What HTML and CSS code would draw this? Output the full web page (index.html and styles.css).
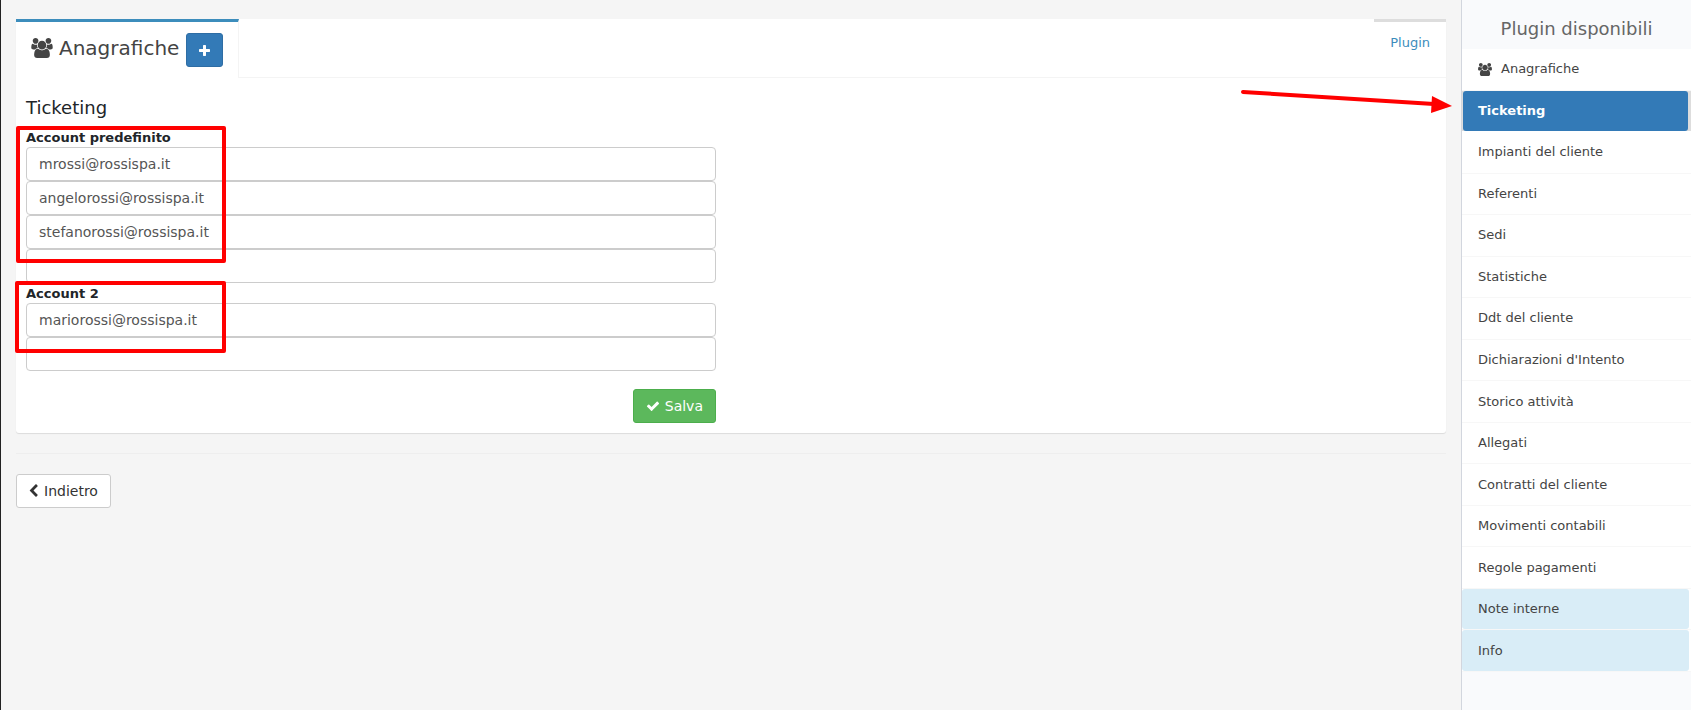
FILE: index.html
```html
<!DOCTYPE html>
<html lang="it">
<head>
  <meta charset="UTF-8">
  <meta name="viewport" content="width=device-width, initial-scale=1.0">
  <title>Anagrafiche - Ticketing</title>
  <link rel="stylesheet" href="styles.css">
</head>
<body>
  <svg class="sprite" aria-hidden="true">
    <symbol id="icon-users" viewBox="0 0 1920 1792"><path d="M593 896q-162 5-265 128h-134q-82 0-138-40.5t-56-118.5q0-353 124-353 6 0 43.5 21t97.5 42.5 119 21.5q67 0 133-23-5 37-5 66 0 139 81 256zm1071 637q0 120-73 189.5t-194 69.5h-874q-121 0-194-69.5t-73-189.5q0-53 3.5-103.5t14-109 26.5-108.5 43-97.5 62-81 85.5-53.5 111.5-20q10 0 43 21.5t73 48 107 48 135 21.5 135-21.5 107-48 73-48 43-21.5q61 0 111.5 20t85.5 53.5 62 81 43 97.5 26.5 108.5 14 109 3.5 103.5zm-1024-1277q0 106-75 181t-181 75-181-75-75-181 75-181 181-75 181 75 75 181zm704 384q0 159-112.5 271.5t-271.5 112.5-271.5-112.5-112.5-271.5 112.5-271.5 271.5-112.5 271.5 112.5 112.5 271.5zm576 225q0 78-56 118.5t-138 40.5h-134q-103-123-265-128 81-117 81-256 0-29-5-66 66 23 133 23 59 0 119-21.5t97.5-42.5 43.5-21q124 0 124 353zm-128-609q0 106-75 181t-181 75-181-75-75-181 75-181 181-75 181 75 75 181z"/></symbol>
    <symbol id="icon-plus" viewBox="192 128 1408 1408"><path d="M1600 736v192q0 40-28 68t-68 28h-416v416q0 40-28 68t-68 28h-192q-40 0-68-28t-28-68v-416h-416q-40 0-68-28t-28-68v-192q0-40 28-68t68-28h416v-416q0-40 28-68t68-28h192q40 0 68 28t28 68v416h416q40 0 68 28t28 68z"/></symbol>
    <symbol id="icon-check" viewBox="0 0 1792 1792"><path d="M1671 566q0 40-28 68l-724 724-136 136q-28 28-68 28t-68-28l-136-136-362-362q-28-28-28-68t28-68l136-136q28-28 68-28t68 28l294 295 656-657q28-28 68-28t68 28l136 136q28 28 28 68z"/></symbol>
    <symbol id="icon-back" viewBox="320 0 1280 1792"><path d="M1427 301l-531 531 531 531q19 19 19 45t-19 45l-166 166q-19 19-45 19t-45-19l-742-742q-19-19-19-45t19-45l742-742q19-19 45-19t45 19l166 166q19 19 19 45t-19 45z"/></symbol>
  </svg>

  <main class="content">
    <section class="panel">
      <div class="tabs">
        <div class="tab active">
          <svg class="icon-title"><use href="#icon-users"/></svg>
          <h1>Anagrafiche</h1>
          <button type="button" class="btn btn-primary" aria-label="Aggiungi"><svg class="icon-plus"><use href="#icon-plus"/></svg></button>
        </div>
        <a class="tab-plugin" href="#plugin">Plugin</a>
      </div>

      <form class="tab-content">
        <h2>Ticketing</h2>
        <div class="account">
          <label for="account-1">Account predefinito</label>
          <input type="text" id="account-1" value="mrossi@rossispa.it">
          <input type="text" aria-label="Account predefinito 2" value="angelorossi@rossispa.it">
          <input type="text" aria-label="Account predefinito 3" value="stefanorossi@rossispa.it">
          <input type="text" aria-label="Account predefinito 4">
          <div class="mark mark-first"></div>
        </div>
        <div class="account">
          <label for="account-2">Account 2</label>
          <input type="text" id="account-2" value="mariorossi@rossispa.it">
          <input type="text" aria-label="Account 2, secondo indirizzo">
          <div class="mark mark-second"></div>
        </div>
        <div class="actions">
          <button type="button" class="btn btn-success"><svg class="icon"><use href="#icon-check"/></svg>Salva</button>
        </div>
      </form>

      <svg class="arrow" viewBox="0 0 212 30" aria-hidden="true">
        <path d="M3 4L194 16" stroke="#f00" stroke-width="4" stroke-linecap="round"/>
        <path d="M192 8L212 18L191 25Z" fill="#f00"/>
      </svg>
    </section>

    <hr>
    <a class="btn btn-default" href="#indietro"><svg class="icon-back"><use href="#icon-back"/></svg>Indietro</a>
  </main>

  <aside class="sidebar">
    <h2>Plugin disponibili</h2>
    <ul>
      <li><a href="#anagrafiche"><svg class="icon-side"><use href="#icon-users"/></svg>Anagrafiche</a></li>
      <li class="active"><a href="#ticketing">Ticketing</a></li>
      <li><a href="#impianti">Impianti del cliente</a></li>
      <li><a href="#referenti">Referenti</a></li>
      <li><a href="#sedi">Sedi</a></li>
      <li><a href="#statistiche">Statistiche</a></li>
      <li><a href="#ddt">Ddt del cliente</a></li>
      <li><a href="#dichiarazioni">Dichiarazioni d'Intento</a></li>
      <li><a href="#storico">Storico attività</a></li>
      <li><a href="#allegati">Allegati</a></li>
      <li><a href="#contratti">Contratti del cliente</a></li>
      <li><a href="#movimenti">Movimenti contabili</a></li>
      <li><a href="#regole">Regole pagamenti</a></li>
      <li class="info"><a href="#note">Note interne</a></li>
      <li class="info"><a href="#info">Info</a></li>
    </ul>
  </aside>
</body>
</html>
```

FILE: styles.css
```css
* {
  box-sizing: border-box;
}

body {
  display: flex;
  min-height: 100vh;
  margin: 0;
  border-left: 1px solid #222;
  background: #f5f5f5;
  color: #212529;
  font-family: "DejaVu Sans", sans-serif;
  font-size: 13px;
  line-height: 20px;
}

h1,
h2 {
  margin: 0;
  font-weight: normal;
}

a {
  color: #3c8dbc;
  text-decoration: none;
}

svg {
  fill: currentColor;
  flex: none;
}

.sprite {
  position: absolute;
  width: 0;
  height: 0;
}

.content {
  flex: 1;
  padding: 19px 15px;
}

.panel {
  position: relative;
  background: #fff;
  border-radius: 3px;
  box-shadow: 0 1px 1px rgba(0, 0, 0, 0.1);
}

/* tabs */
.tabs {
  display: flex;
  justify-content: space-between;
  align-items: flex-start;
  height: 59px;
  border-bottom: 1px solid #f4f4f4;
}

.tab {
  display: flex;
  align-items: center;
  height: 59px;
  padding: 0 15px 0 15px;
  border-top: 3px solid #3c8dbc;
  border-right: 1px solid #f4f4f4;
  background: #fff;
  color: #444;
}

.tab h1 {
  margin: 0 7px 0 6px;
  padding-bottom: 4px;
  font-size: 20px;
}

.icon-title {
  width: 22px;
  height: 20px;
  margin-bottom: 4px;
}

.tab-plugin {
  padding: 11px 16px;
  border-top: 3px solid #ddd;
}

/* buttons */
.btn {
  display: inline-flex;
  align-items: center;
  gap: 5px;
  height: 34px;
  padding: 0 12px;
  border: 1px solid;
  border-radius: 3px;
  font-family: inherit;
  font-size: 14px;
}

.btn-primary {
  background: #337ab7;
  border-color: #2e6da4;
  color: #fff;
}

.btn-success {
  background: #5cb85c;
  border-color: #4cae4c;
  color: #fff;
}

.btn-default {
  background: #fff;
  border-color: #ccc;
  color: #333;
}

.icon {
  width: 14px;
  height: 14px;
}

.icon-plus {
  width: 11px;
  height: 11px;
}

.icon-back {
  width: 10px;
  height: 14px;
}

/* form */
.tab-content {
  padding: 20px 10px 10px;
}

.tab-content h2 {
  margin-bottom: 9px;
  font-size: 18px;
}

.account {
  position: relative;
}

.account,
.actions {
  width: calc(50% - 15px);
}

.account label {
  display: block;
  height: 20px;
  font-weight: bold;
  line-height: 22px;
}

.account input {
  display: block;
  width: 100%;
  height: 34px;
  padding: 0 12px 1px;
  border: 1px solid #ccc;
  border-radius: 4px;
  background: #fff;
  color: #555;
  font-family: inherit;
  font-size: 14px;
}

.actions {
  display: flex;
  justify-content: flex-end;
  margin-top: 18px;
}

hr {
  margin: 20px 0;
  border: 0;
  border-top: 1px solid #eee;
}

/* red highlights */
.mark {
  position: absolute;
  border: 4px solid #f00;
  border-radius: 2px;
  pointer-events: none;
}

.mark-first {
  top: -1px;
  left: -10px;
  width: 210px;
  height: 137px;
}

.mark-second {
  top: -2px;
  left: -11px;
  width: 211px;
  height: 72px;
}

.arrow {
  position: absolute;
  top: 69px;
  right: -6px;
  width: 212px;
  height: 30px;
}

/* sidebar */
.sidebar {
  width: 230px;
  border-left: 1px solid #d2d6de;
  background: #f9fafc;
}

.sidebar h2 {
  padding: 19px 0 10px;
  color: #666;
  font-size: 18px;
  text-align: center;
}

.sidebar ul {
  display: grid;
  grid-auto-rows: 1fr;
  min-height: 623px;
  margin: 0;
  padding: 0;
  list-style: none;
}

.sidebar li {
  display: flex;
  border-bottom: 1px solid #f7f7f7;
  background: #fff;
}

.sidebar li a {
  display: flex;
  flex: 1;
  align-items: center;
  padding: 0 16px;
  border-radius: 3px;
  color: #444;
}

.sidebar .active {
  border-bottom-color: #fff;
  background: #ddd;
}

.sidebar .active a {
  margin: 0 3px 0 1px;
  padding: 0 15px;
  background: #337ab7;
  color: #fff;
  font-weight: bold;
}

.sidebar .info a {
  margin-right: 2px;
  background: #d9edf7;
}

.icon-side {
  width: 14px;
  height: 13px;
  margin-right: 9px;
}
```
